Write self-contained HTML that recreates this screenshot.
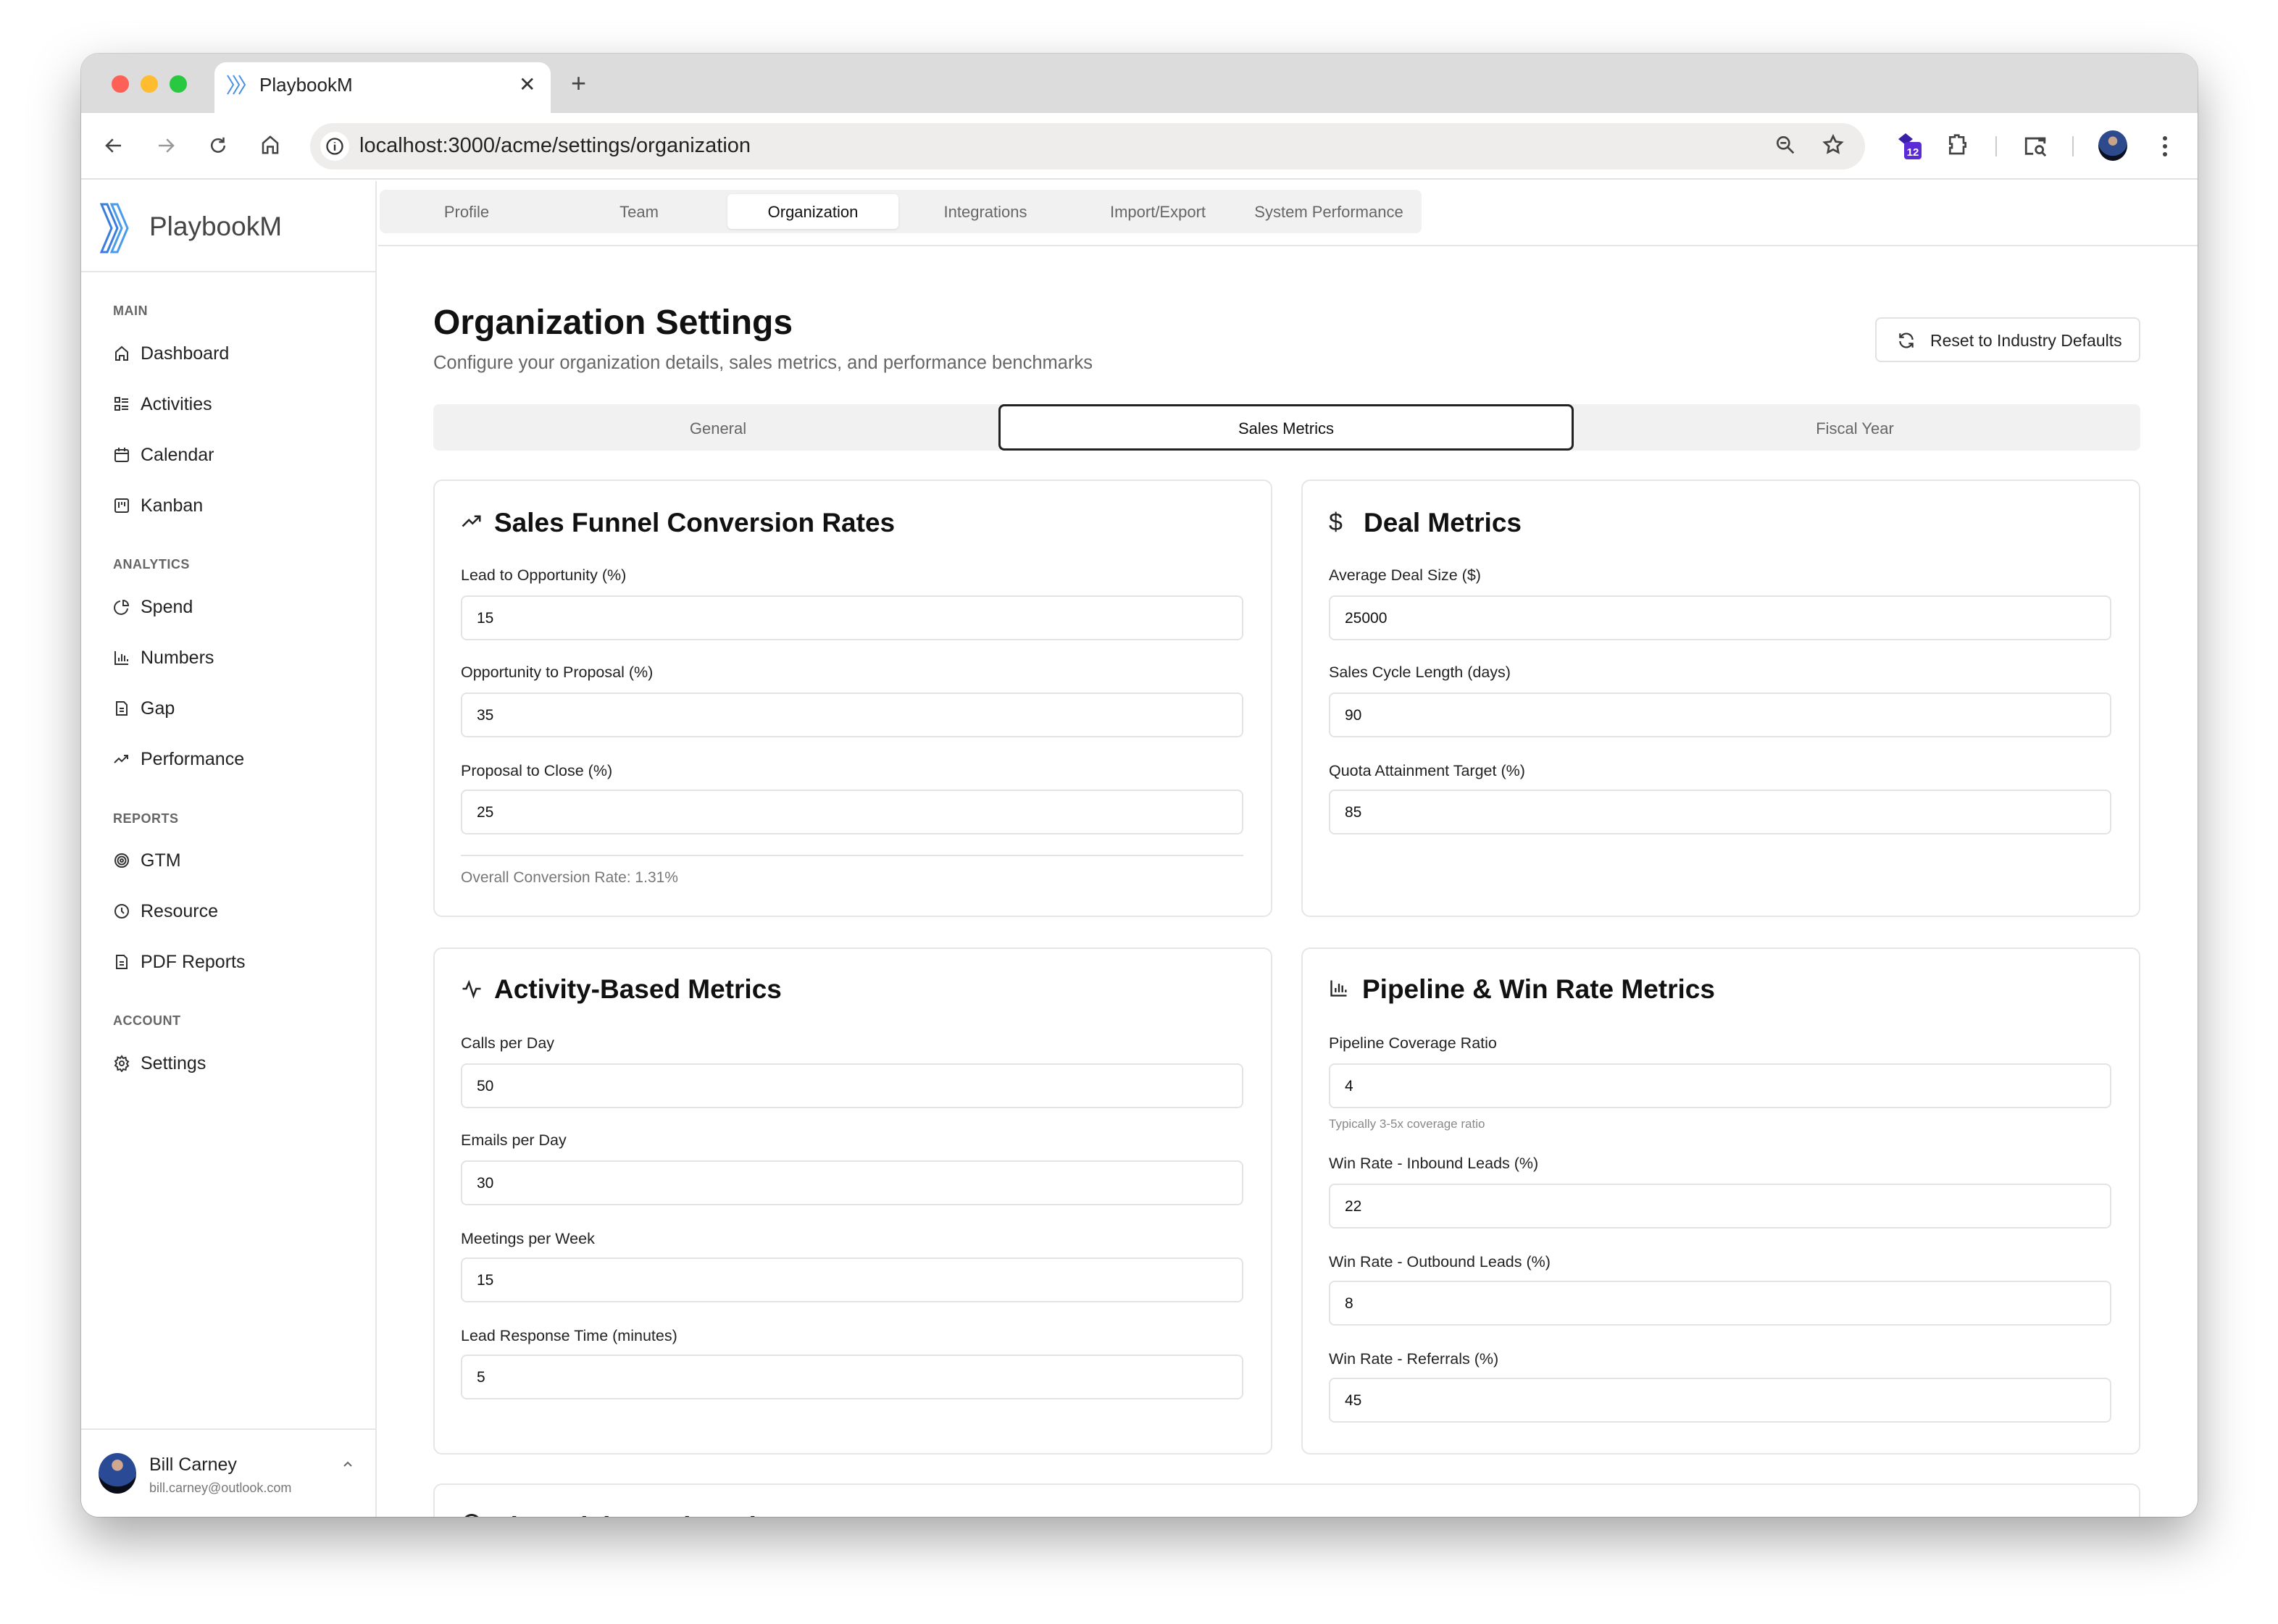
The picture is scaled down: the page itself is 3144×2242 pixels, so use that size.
<!DOCTYPE html>
<html><head><meta charset="utf-8">
<style>
*{box-sizing:border-box;margin:0;padding:0}
body{width:3144px;height:2242px;background:#fff;font-family:"Liberation Sans",sans-serif;position:relative;overflow:hidden;color:#1a1a1a}
.a{position:absolute}
.win{position:absolute;left:112px;top:74px;width:2921px;height:2020px;border-radius:24px;overflow:hidden;background:#fff;box-shadow:0 30px 70px rgba(0,0,0,.35),0 0 0 1px rgba(0,0,0,.15)}
.t{position:absolute;white-space:nowrap}
.lbl{font-size:21.5px;color:#222;margin-top:2px}
.inp{position:absolute;height:62px;border:2px solid #e3e3e3;border-radius:8px;font-size:21px;color:#111;padding-left:20px;line-height:60px}
.card{position:absolute;border:2px solid #e6e6e6;border-radius:12px;background:#fff}
.ct{position:absolute;font-size:37px;font-weight:bold;color:#111;white-space:nowrap;margin-top:1px}
.sec{position:absolute;left:44px;font-size:18px;font-weight:bold;color:#666;letter-spacing:.5px}
.it{position:absolute;left:44px;font-size:25px;color:#222;height:30px;line-height:30px;white-space:nowrap;margin-top:2px}
.it svg{position:absolute;left:0;top:3px}
.it span{position:absolute;left:38px}
.tab{position:absolute;top:0;height:62px;line-height:62px;font-size:22px;color:#666;text-align:center}
</style></head><body>
<div class="win">
 <div class="a" style="left:0;top:0;width:2921px;height:82px;background:#dcdcdc"></div>
 <div class="a" style="left:42px;top:30px;width:24px;height:24px;border-radius:50%;background:#fe5f57"></div>
 <div class="a" style="left:82px;top:30px;width:24px;height:24px;border-radius:50%;background:#febc2e"></div>
 <div class="a" style="left:122px;top:30px;width:24px;height:24px;border-radius:50%;background:#28c840"></div>
 <div class="a" style="left:184px;top:12px;width:464px;height:74px;background:#fff;border-radius:16px 16px 0 0"></div>
 <svg class="a" style="left:200px;top:28px" width="34" height="30" viewBox="0 0 34 30"><g fill="none" stroke="#4a90e2" stroke-width="2"><path d="M2 2l8 13-8 13M10 2l8 13-8 13M18 2l8 13-8 13"/></g></svg>
 <div class="t" style="left:246px;top:28px;font-size:26px;color:#222">PlaybookM</div>
 <div class="t" style="left:604px;top:26px;font-size:28px;color:#333">✕</div>
 <div class="t" style="left:676px;top:20px;font-size:36px;color:#444">+</div>
 <div class="a" style="left:0;top:82px;width:2921px;height:92px;background:#fff;border-bottom:2px solid #e2e2e2"></div>
 <svg class="a" style="left:30px;top:112px" width="30" height="30" viewBox="0 0 24 24"><path d="M20 12H5M11 5l-7 7 7 7" fill="none" stroke="#444" stroke-width="2"/></svg>
 <svg class="a" style="left:102px;top:112px" width="30" height="30" viewBox="0 0 24 24"><path d="M4 12h15M13 5l7 7-7 7" fill="none" stroke="#999" stroke-width="2"/></svg>
 <svg class="a" style="left:174px;top:112px" width="30" height="30" viewBox="0 0 24 24"><path d="M19 12a7 7 0 1 1-2-5M18 3v5h-5" fill="none" stroke="#444" stroke-width="2"/></svg>
 <svg class="a" style="left:246px;top:110px" width="30" height="32" viewBox="0 0 24 24"><path d="M4 21V10l8-7 8 7v11h-5v-7H9v7z" fill="none" stroke="#444" stroke-width="2"/></svg>
 <div class="a" style="left:316px;top:96px;width:2146px;height:64px;border-radius:32px;background:#efedec"></div>
 <div class="a" style="left:330px;top:108px;width:40px;height:40px;border-radius:50%;background:#fff"></div>
 <svg class="a" style="left:336px;top:114px" width="28" height="28" viewBox="0 0 24 24"><circle cx="12" cy="12" r="9" fill="none" stroke="#333" stroke-width="2"/><path d="M12 10v7M12 7v1" stroke="#333" stroke-width="2"/></svg>
 <div class="t" style="left:384px;top:111px;font-size:29px;color:#222">localhost:3000/acme/settings/organization</div>
 <svg class="a" style="left:2336px;top:110px" width="32" height="32" viewBox="0 0 24 24"><circle cx="10" cy="10" r="6" fill="none" stroke="#444" stroke-width="2"/><path d="M7 10h6M14.5 14.5l6 6" stroke="#444" stroke-width="2"/></svg>
 <svg class="a" style="left:2402px;top:110px" width="32" height="32" viewBox="0 0 24 24"><path d="M12 3l2.7 5.6 6.1.8-4.5 4.2 1.1 6.1L12 16.8 6.6 19.7l1.1-6.1-4.5-4.2 6.1-.8z" fill="none" stroke="#444" stroke-width="2"/></svg>
 <svg class="a" style="left:2504px;top:108px" width="42" height="40" viewBox="0 0 42 40"><path d="M4 10L14 2l10 8-10 8z" fill="#3a1fa8"/><rect x="12" y="14" width="24" height="24" rx="4" fill="#5b2bd6"/><text x="24" y="33" font-size="15" font-weight="bold" fill="#fff" text-anchor="middle" font-family="Liberation Sans">12</text></svg>
 <svg class="a" style="left:2574px;top:108px" width="32" height="36" viewBox="0 0 24 26"><path d="M4 5h5V3h4v2h5v6h2v4h-2v7H4v-6h2v-4H4z" fill="none" stroke="#444" stroke-width="2"/></svg>
 <div class="a" style="left:2642px;top:114px;width:2px;height:28px;background:#ccc"></div>
 <svg class="a" style="left:2680px;top:110px" width="34" height="34" viewBox="0 0 24 24"><path d="M10 20H3V5h18v5" fill="none" stroke="#444" stroke-width="2"/><rect x="15" y="4" width="7" height="4" fill="#444"/><circle cx="16" cy="16" r="3.5" fill="none" stroke="#444" stroke-width="2"/><path d="M18.5 18.5L22 22" stroke="#444" stroke-width="2"/></svg>
 <div class="a" style="left:2748px;top:114px;width:2px;height:28px;background:#ccc"></div>
 <div class="a" style="left:2784px;top:106px;width:40px;height:42px;border-radius:50%;background:radial-gradient(circle at 50% 35%,#c9a28a 0 18%,#2c4a8c 19% 60%,#0b0f1e 61%)"></div>
 <div class="a" style="left:2873px;top:114px;width:6px;height:6px;border-radius:50%;background:#444;box-shadow:0 11px 0 #444,0 22px 0 #444"></div>

 <div class="a" style="left:0;top:176px;width:408px;height:1844px;border-right:2px solid #e6e6e6;background:#fff"></div>
 <div class="a" style="left:0;top:300px;width:408px;height:2px;background:#e6e6e6"></div>
 <svg class="a" style="left:24px;top:204px" width="64" height="74" viewBox="0 0 64 74"><g fill="none" stroke="#3b7ddd" stroke-width="3"><path d="M4 4h8l14 33-14 33H4l14-33z"/><path d="M18 4h8l14 33-14 33h-8l14-33z" stroke="#4a9be8"/></g></svg>
 <div class="t" style="left:94px;top:218px;font-size:37px;color:#444">PlaybookM</div>
 <div class="sec" style="top:345px">MAIN</div>
 <div class="it" style="top:397px"><svg width="24" height="24" viewBox="0 0 24 24"><path d="M4 21V10l8-7 8 7v11h-5v-6H9v6z" fill="none" stroke="#333" stroke-width="2"/></svg><span>Dashboard</span></div>
 <div class="it" style="top:467px"><svg width="24" height="24" viewBox="0 0 24 24"><g fill="none" stroke="#333" stroke-width="2"><rect x="3" y="3" width="6" height="6"/><rect x="3" y="14" width="6" height="6"/><path d="M12 5h9M12 9h9M12 15h9M12 19h9"/></g></svg><span>Activities</span></div>
 <div class="it" style="top:537px"><svg width="24" height="24" viewBox="0 0 24 24"><g fill="none" stroke="#333" stroke-width="2"><rect x="3" y="5" width="18" height="16" rx="2"/><path d="M3 10h18M8 2v5M16 2v5"/></g></svg><span>Calendar</span></div>
 <div class="it" style="top:607px"><svg width="24" height="24" viewBox="0 0 24 24"><g fill="none" stroke="#333" stroke-width="2"><rect x="3" y="3" width="18" height="18" rx="2"/><path d="M8 7v8M12 7v4M16 7v6"/></g></svg><span>Kanban</span></div>
 <div class="sec" style="top:695px">ANALYTICS</div>
 <div class="it" style="top:747px"><svg width="24" height="24" viewBox="0 0 24 24"><g fill="none" stroke="#333" stroke-width="2"><path d="M20 14A9 9 0 1 1 10 4"/><path d="M14 3a7 7 0 0 1 7 7h-7z"/></g></svg><span>Spend</span></div>
 <div class="it" style="top:817px"><svg width="24" height="24" viewBox="0 0 24 24"><g fill="none" stroke="#333" stroke-width="2"><path d="M3 3v18h18M8 17v-5M12 17V7M16 17v-8M20 17v-3"/></g></svg><span>Numbers</span></div>
 <div class="it" style="top:887px"><svg width="24" height="24" viewBox="0 0 24 24"><g fill="none" stroke="#333" stroke-width="2"><path d="M5 3h10l4 4v14H5z"/><path d="M9 12h6M9 16h6"/></g></svg><span>Gap</span></div>
 <div class="it" style="top:957px"><svg width="24" height="24" viewBox="0 0 24 24"><path d="M2 17l6-6 4 4 8-8M15 7h5v5" fill="none" stroke="#333" stroke-width="2"/></svg><span>Performance</span></div>
 <div class="sec" style="top:1046px">REPORTS</div>
 <div class="it" style="top:1097px"><svg width="24" height="24" viewBox="0 0 24 24"><g fill="none" stroke="#333" stroke-width="2"><circle cx="12" cy="12" r="9"/><circle cx="12" cy="12" r="5.5"/><circle cx="12" cy="12" r="2"/></g></svg><span>GTM</span></div>
 <div class="it" style="top:1167px"><svg width="24" height="24" viewBox="0 0 24 24"><g fill="none" stroke="#333" stroke-width="2"><circle cx="12" cy="12" r="9"/><path d="M12 7v5l3 3"/></g></svg><span>Resource</span></div>
 <div class="it" style="top:1237px"><svg width="24" height="24" viewBox="0 0 24 24"><g fill="none" stroke="#333" stroke-width="2"><path d="M5 3h10l4 4v14H5z"/><path d="M9 12h6M9 16h6"/></g></svg><span>PDF Reports</span></div>
 <div class="sec" style="top:1325px">ACCOUNT</div>
 <div class="it" style="top:1377px"><svg width="24" height="24" viewBox="0 0 24 24"><g fill="none" stroke="#333" stroke-width="2"><circle cx="12" cy="12" r="3"/><path d="M12 2l2 3 3.5-1 .5 3.5 3 2-2 3 2 3-3 2-.5 3.5-3.5-1-2 3-2-3-3.5 1L6 17 3 15l2-3-2-3 3-2 .5-3.5L10 5z"/></g></svg><span>Settings</span></div>
 <div class="a" style="left:0;top:1898px;width:408px;height:2px;background:#e6e6e6"></div>
 <div class="a" style="left:24px;top:1932px;width:52px;height:56px;border-radius:50%;background:radial-gradient(circle at 50% 30%,#d0a890 0 16%,#2a4a96 17% 62%,#0a0d18 63%)"></div>
 <div class="t" style="left:94px;top:1934px;font-size:25px;color:#222">Bill Carney</div>
 <div class="t" style="left:94px;top:1970px;font-size:18px;color:#777">bill.carney@outlook.com</div>
 <svg class="a" style="left:358px;top:1938px" width="20" height="20" viewBox="0 0 20 20"><path d="M5 12l5-5 5 5" fill="none" stroke="#666" stroke-width="2"/></svg>

 <div class="a" style="left:410px;top:264px;width:2511px;height:2px;background:#e6e6e6"></div>
 <div class="a" style="left:412px;top:188px;width:1438px;height:60px;background:#f1f1f1;border-radius:8px">
  <div class="tab" style="left:0;width:240px">Profile</div>
  <div class="tab" style="left:240px;width:236px">Team</div>
  <div class="a" style="left:480px;top:6px;width:236px;height:48px;background:#fff;border-radius:6px;box-shadow:0 1px 3px rgba(0,0,0,.1)"></div>
  <div class="tab" style="left:480px;width:236px;color:#111">Organization</div>
  <div class="tab" style="left:716px;width:240px">Integrations</div>
  <div class="tab" style="left:956px;width:236px">Import/Export</div>
  <div class="tab" style="left:1192px;width:236px">System Performance</div>
 </div>
 <div class="t" style="left:486px;top:344px;font-size:48px;font-weight:bold;color:#111">Organization Settings</div>
 <div class="t" style="left:486px;top:413px;font-size:25.5px;color:#666">Configure your organization details, sales metrics, and performance benchmarks</div>
 <div class="a" style="left:2476px;top:364px;width:366px;height:62px;border:2px solid #e2e2e2;border-radius:8px;background:#fff"></div>
 <svg class="a" style="left:2506px;top:383px" width="26" height="26" viewBox="0 0 24 24"><g fill="none" stroke="#333" stroke-width="2"><path d="M20 11A8 8 0 0 0 6 6L4 8M4 13a8 8 0 0 0 14 5l2-2"/><path d="M4 3v5h5M20 21v-5h-5"/></g></svg>
 <div class="t" style="left:2552px;top:383px;font-size:23px;color:#222">Reset to Industry Defaults</div>
 <div class="a" style="left:486px;top:484px;width:2356px;height:64px;background:#f1f1f1;border-radius:8px"></div>
 <div class="a" style="left:1266px;top:484px;width:794px;height:64px;border:3px solid #222;border-radius:8px;background:#fff"></div>
 <div class="t" style="left:486px;top:486px;width:786px;line-height:64px;text-align:center;font-size:22px;color:#666">General</div>
 <div class="t" style="left:1266px;top:486px;width:794px;line-height:64px;text-align:center;font-size:22px;color:#111">Sales Metrics</div>
 <div class="t" style="left:2060px;top:486px;width:776px;line-height:64px;text-align:center;font-size:22px;color:#666">Fiscal Year</div>

 <div class="card" style="left:486px;top:588px;width:1158px;height:604px"></div>
 <svg class="a" style="left:524px;top:630px" width="30" height="30" viewBox="0 0 24 24"><path d="M2 18l7-7 4 4 8-8M15 7h6v6" fill="none" stroke="#222" stroke-width="2"/></svg>
 <div class="ct" style="left:570px;top:626px">Sales Funnel Conversion Rates</div>
 <div class="t lbl" style="left:524px;top:706px">Lead to Opportunity (%)</div>
 <div class="inp" style="left:524px;top:748px;width:1080px">15</div>
 <div class="t lbl" style="left:524px;top:840px">Opportunity to Proposal (%)</div>
 <div class="inp" style="left:524px;top:882px;width:1080px">35</div>
 <div class="t lbl" style="left:524px;top:976px">Proposal to Close (%)</div>
 <div class="inp" style="left:524px;top:1016px;width:1080px">25</div>
 <div class="a" style="left:524px;top:1106px;width:1080px;height:2px;background:#e3e3e3"></div>
 <div class="t" style="left:524px;top:1126px;font-size:21px;color:#777">Overall Conversion Rate: 1.31%</div>

 <div class="card" style="left:1684px;top:588px;width:1158px;height:604px"></div>
 <div class="t" style="left:1722px;top:628px;font-size:34px;color:#222">$</div>
 <div class="ct" style="left:1770px;top:626px">Deal Metrics</div>
 <div class="t lbl" style="left:1722px;top:706px">Average Deal Size ($)</div>
 <div class="inp" style="left:1722px;top:748px;width:1080px">25000</div>
 <div class="t lbl" style="left:1722px;top:840px">Sales Cycle Length (days)</div>
 <div class="inp" style="left:1722px;top:882px;width:1080px">90</div>
 <div class="t lbl" style="left:1722px;top:976px">Quota Attainment Target (%)</div>
 <div class="inp" style="left:1722px;top:1016px;width:1080px">85</div>

 <div class="card" style="left:486px;top:1234px;width:1158px;height:700px"></div>
 <svg class="a" style="left:524px;top:1276px" width="30" height="30" viewBox="0 0 24 24"><path d="M2 12h4l3-7 5 15 3-8h5" fill="none" stroke="#222" stroke-width="2"/></svg>
 <div class="ct" style="left:570px;top:1270px">Activity-Based Metrics</div>
 <div class="t lbl" style="left:524px;top:1352px">Calls per Day</div>
 <div class="inp" style="left:524px;top:1394px;width:1080px">50</div>
 <div class="t lbl" style="left:524px;top:1486px">Emails per Day</div>
 <div class="inp" style="left:524px;top:1528px;width:1080px">30</div>
 <div class="t lbl" style="left:524px;top:1622px">Meetings per Week</div>
 <div class="inp" style="left:524px;top:1662px;width:1080px">15</div>
 <div class="t lbl" style="left:524px;top:1756px">Lead Response Time (minutes)</div>
 <div class="inp" style="left:524px;top:1796px;width:1080px">5</div>

 <div class="card" style="left:1684px;top:1234px;width:1158px;height:700px"></div>
 <svg class="a" style="left:1722px;top:1276px" width="28" height="28" viewBox="0 0 24 24"><path d="M3 3v18h18M8 17v-5M12 17V7M16 17v-8M20 17v-3" fill="none" stroke="#222" stroke-width="2"/></svg>
 <div class="ct" style="left:1768px;top:1270px">Pipeline &amp; Win Rate Metrics</div>
 <div class="t lbl" style="left:1722px;top:1352px">Pipeline Coverage Ratio</div>
 <div class="inp" style="left:1722px;top:1394px;width:1080px">4</div>
 <div class="t" style="left:1722px;top:1468px;font-size:17px;color:#888">Typically 3-5x coverage ratio</div>
 <div class="t lbl" style="left:1722px;top:1518px">Win Rate - Inbound Leads (%)</div>
 <div class="inp" style="left:1722px;top:1560px;width:1080px">22</div>
 <div class="t lbl" style="left:1722px;top:1654px">Win Rate - Outbound Leads (%)</div>
 <div class="inp" style="left:1722px;top:1694px;width:1080px">8</div>
 <div class="t lbl" style="left:1722px;top:1788px">Win Rate - Referrals (%)</div>
 <div class="inp" style="left:1722px;top:1828px;width:1080px">45</div>

 <div class="card" style="left:486px;top:1974px;width:2356px;height:200px"></div>
 <div class="ct" style="left:570px;top:2012px">Financial Benchmarks</div>
 <div class="a" style="left:526px;top:2016px;width:26px;height:26px;border-radius:50%;border:3px solid #222"></div>
</div>
</body></html>
